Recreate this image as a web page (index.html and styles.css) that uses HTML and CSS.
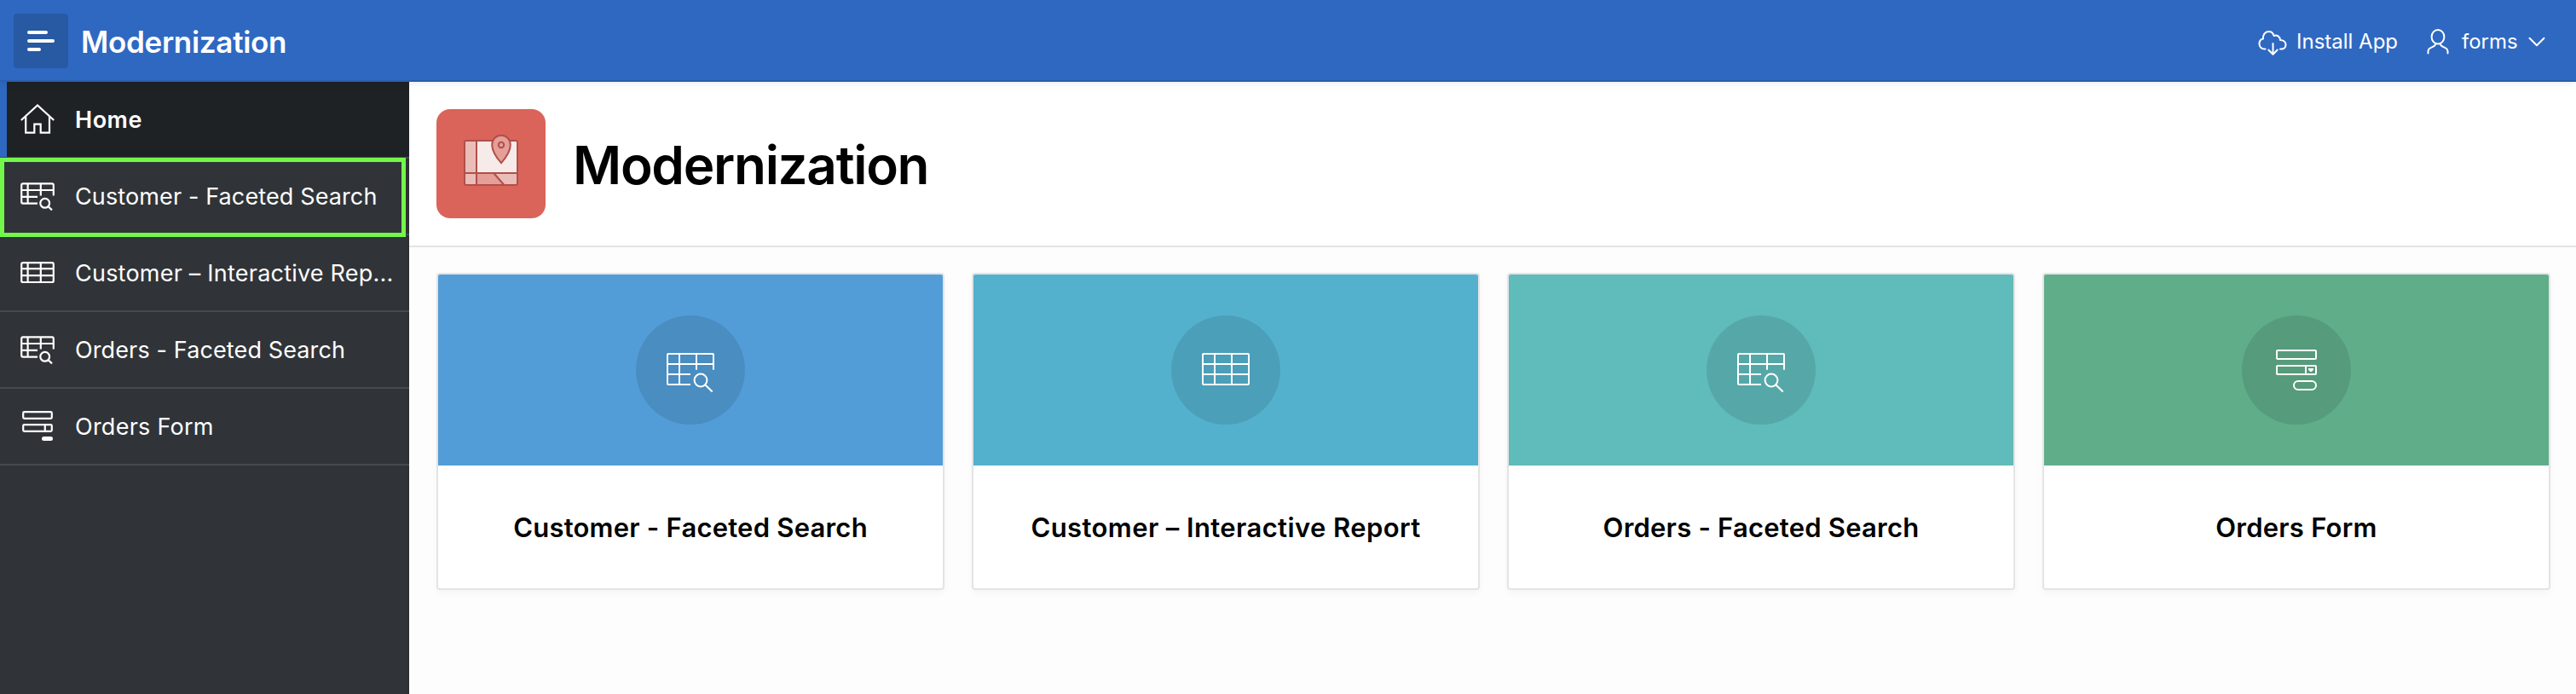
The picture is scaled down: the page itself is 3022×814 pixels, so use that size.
FILE: index.html
```html
<!DOCTYPE html>
<html lang="en">
<head>
<meta charset="utf-8">
<title>Modernization</title>
<link rel="stylesheet" href="styles.css">
</head>
<body>
<svg class="defs" aria-hidden="true">
  <symbol id="nav-search" viewBox="0 0 40 40"><path d="M20 28.6H3Q1.2 28.6 1.2 26.8V7.2Q1.2 5.4 3 5.4H37Q38.8 5.4 38.8 7.2V19.6M1.2 13H38.8M1.2 20.8H20M8.6 5.4V28.6M23.8 5.4V19.4"/><circle cx="28.7" cy="28.3" r="5.4"/><path d="M32.6 32.2L37 36.4"/></symbol>
  <symbol id="nav-table" viewBox="0 0 40 40"><rect x="1.2" y="8.2" width="37.6" height="22.8" rx="1.8"/><path d="M1.2 15.2H38.8M1.2 23.2H38.8M8.6 8.2V31M23.8 8.2V31"/></symbol>
  <symbol id="big-search" viewBox="0 0 64 64"><path d="M32 49H6Q5 49 5 48V14Q5 13 6 13H58Q59 13 59 14V31.7M5 25H59M5 37H32M19 13V49M39 13V31.7"/><circle cx="44" cy="44" r="7.4"/><path d="M49.2 49.2L57.7 57.5"/></symbol>
</svg>
<header class="header">
  <button class="menu" aria-label="Menu"><svg width="64" height="64" viewBox="0 0 64 64"><path d="M18 22H38M18 32H46M18 42H30"/></svg></button>
  <span class="brand">Modernization</span>
  <nav class="tools">
    <a class="tool"><svg class="cloud" width="34" height="40" viewBox="0 0 34 40"><path d="M8.500 29.600H7.500C4 29.600 1.500 26.800 1.500 23.400C1.500 20.400 3.300 18 6 17.500C5.300 13 8.200 9 12.500 9C15.600 9 17.800 11 18.600 14C22.500 12.600 26.200 15.200 26 19C29.800 19 32.500 21.200 32.500 24.500C32.500 27.500 30.300 29.600 27.200 29.600H26M17.500 23V35.500M12.300 30.500L17.500 35.700L22.700 30.500"/></svg><span class="install">Install App</span></a>
    <a class="tool user"><svg width="26" height="40" viewBox="0 0 26 40"><ellipse cx="13" cy="15.200" rx="7.400" ry="8.300"/><path d="M1.500 34.500V32.500C1.500 29.500 3.200 28.400 5.500 27.600C8 26.700 9.800 25.600 10.500 23.200M24.500 34.500V32.500C24.500 29.500 22.800 28.400 20.500 27.600C18 26.700 16.200 25.600 15.500 23.200"/></svg><span class="login">forms</span><svg class="chev" width="20" height="40" viewBox="0 0 20 40"><path d="M1.500 16.800L10 25.200L18.500 16.800"/></svg></a>
  </nav>
</header>
<div class="body">
  <nav class="sidebar">
    <a class="item active"><svg class="ico" viewBox="0 0 40 40"><path d="M.8 21L20 3.400L39.200 21M6.200 16.300V35.700H16.300V25.600H23.700V35.700H34V16.300"/></svg><span class="label l1">Home</span></a>
    <a class="item"><svg class="ico"><use href="#nav-search"/></svg><span class="label l2">Customer - Faceted Search</span><i class="highlight"></i></a>
    <a class="item"><svg class="ico"><use href="#nav-table"/></svg><span class="label l3">Customer – Interactive Rep...</span></a>
    <a class="item"><svg class="ico"><use href="#nav-search"/></svg><span class="label l4">Orders - Faceted Search</span></a>
    <a class="item"><svg class="ico" viewBox="0 0 40 40"><path d="M4.500 3.200H35.500Q36.800 3.200 36.800 4.500V9.500Q36.800 10.800 35.500 10.800H4.500Q3.200 10.800 3.200 9.500V4.500Q3.200 3.200 4.500 3.200ZM4.500 18.200H35.500Q36.800 18.200 36.800 19.500V24.500Q36.800 25.800 35.500 25.800H4.500Q3.200 25.800 3.200 24.500V19.500Q3.200 18.200 4.500 18.200ZM28.800 18.200V25.800"/><rect class="solid" x="25" y="32" width="13" height="5" rx="2.500"/></svg><span class="label l5">Orders Form</span></a>
  </nav>
  <main class="main">
    <section class="hero">
      <svg class="app-icon" viewBox="0 0 128 128">
        <rect class="map-pale" x="33" y="37" width="62" height="52" rx="2"/>
        <path class="map-light" d="M33 37H47V89H33ZM47 75H95V89H47Z"/>
        <path class="map-mid" d="M47 75H67.200L79.400 89H47Z"/>
        <g class="map-line"><rect x="33" y="37" width="62" height="52" rx="2"/><path d="M47 37V89M33 75H95M67.200 75L79.400 89"/><path class="map-mid" d="M76 63.200C71 57.500 65.200 49 65.200 42C65.200 35.500 69.800 30.800 76 30.800S86.800 35.500 86.800 42C86.800 49 81 57.500 76 63.200Z"/><circle class="map-mid" cx="76" cy="42" r="3.200"/></g>
      </svg>
      <h1 class="title">Modernization</h1>
    </section>
    <section class="cards">
      <article class="card"><div class="band blue"><span class="disc"><svg><use href="#big-search"/></svg></span></div><h3 class="name n1">Customer - Faceted Search</h3></article>
      <article class="card"><div class="band cyan"><span class="disc"><svg viewBox="0 0 64 64"><rect x="5" y="13" width="54" height="36" rx="1"/><path d="M5 25H59M5 37H59M19 13V49M39 13V49"/></svg></span></div><h3 class="name n2">Customer – Interactive Report</h3></article>
      <article class="card"><div class="band teal"><span class="disc"><svg><use href="#big-search"/></svg></span></div><h3 class="name n3">Orders - Faceted Search</h3></article>
      <article class="card"><div class="band green"><span class="disc"><svg viewBox="0 0 64 64"><rect x="9" y="9" width="46" height="10" rx="1"/><rect x="9" y="27" width="46" height="10" rx="1"/><path d="M43 27V37"/><path class="solid" d="M46 30H52V31.500L49.800 34H48.200L46 31.500Z"/><rect x="29" y="45" width="26" height="10" rx="5"/></svg></span></div><h3 class="name n4">Orders Form</h3></article>
    </section>
  </main>
</div>
</body>
</html>
```
FILE: styles.css
```css
* { box-sizing: border-box; }
body { margin: 0; height: 814px; overflow: hidden; font-family: Inter, "Liberation Sans", sans-serif; background: #fdfdfd; color: #000; display: flex; flex-direction: column; }
svg { display: block; flex: none; fill: none; stroke: #fff; stroke-width: 2; }
.defs { display: none; }
.solid { fill: #fff; stroke: none; }

.header { position: relative; z-index: 2; height: 96px; flex: none; display: flex; align-items: center; padding: 0 36px 0 16px; background: #2f68c1; border-bottom: 2px solid #2a5eae; box-shadow: 0 2px 8px rgba(0, 0, 0, .07); color: #fff; }
.menu { width: 64px; height: 64px; padding: 0; border: 0; border-radius: 4px; background: #2859a3; margin-top: 2px; }
.menu svg { stroke-width: 4; stroke-linecap: round; }
.brand { margin-left: 15px; padding-top: 3px; font-size: 35px; line-height: 44px; font-weight: 600; letter-spacing: -.3px; }
.tools { display: flex; margin-left: auto; margin-top: 1px; gap: 36px; }
.tool { display: flex; align-items: center; font-size: 24px; line-height: 40px; }
.tool svg { stroke-linecap: round; stroke-linejoin: round; }
.install { margin-left: 11px; padding-top: 2px; width: 117px; white-space: nowrap; }
.login { margin-left: 15px; padding-top: 2px; width: 78px; }

.body { flex: 1; display: flex; min-height: 0; }
.sidebar { width: 480px; flex: none; background: #303438; border-right: 2px solid #2c3033; color: #fff; }
.item { position: relative; display: flex; align-items: center; width: 480px; height: 90px; padding: 0 8px 0 24px; border-bottom: 2px solid #47494c; font-size: 27px; }
.item.active { background: #1f2225; font-weight: 600; box-shadow: inset 8px 0 #2f68c1; }
.ico { width: 40px; height: 40px; stroke-width: 2.2; }
.label { margin-left: 24px; padding-top: 2px; line-height: 40px; white-space: nowrap; }
.l1 { letter-spacing: .5px; }
.l2, .l4 { letter-spacing: .12px; }
.l3 { letter-spacing: .22px; }
.l5 { letter-spacing: .25px; }
.highlight { position: absolute; left: 0; top: -1px; width: 476px; height: 93px; border: 5px solid #74f74b; z-index: 1; }

.main { flex: 1; min-width: 0; }
.hero { height: 194px; display: flex; align-items: center; padding-left: 32px; background: #fff; border-bottom: 2px solid #e4e4e4; }
.app-icon { width: 128px; height: 128px; border-radius: 16px; background: #da645a; stroke: none; }
.map-pale { fill: #f7ebea; }
.map-light { fill: #ebbdb9; }
.map-mid { fill: #e59e98; }
.map-line { stroke: #b05048; stroke-width: 2; }
.map-line > rect { fill: none; }
.title { margin: 0 0 0 32px; padding-top: 4px; font-size: 62px; line-height: 80px; font-weight: 600; letter-spacing: -1.3px; }

.cards { display: grid; grid-template-columns: repeat(4, 596px); gap: 32px; padding: 30px 30px 0 32px; }
.card { height: 372px; border: 2px solid #e4e4e4; border-radius: 4px; overflow: hidden; background: #fff; box-shadow: 0 4px 8px rgba(0, 0, 0, .035); }
.band { height: 224px; display: flex; align-items: center; justify-content: center; }
.blue { background: #529dd7; }
.cyan { background: #54b1cd; }
.teal { background: #60bbbb; }
.green { background: #60ad8a; }
.disc { width: 128px; height: 128px; border-radius: 50%; background: rgba(0, 0, 0, .1); display: flex; align-items: center; justify-content: center; }
.disc svg { width: 64px; height: 64px; }
.name { margin: 0; padding-top: 1px; line-height: 144px; text-align: center; font-size: 31px; font-weight: 600; letter-spacing: .22px; }
.n2 { letter-spacing: .4px; }
```
